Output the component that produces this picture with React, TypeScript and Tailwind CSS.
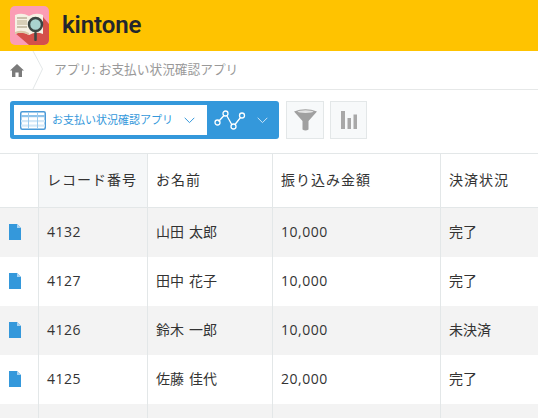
const rows = [
  ["4132", "山田 太郎", "10,000", "完了"],
  ["4127", "田中 花子", "10,000", "完了"],
  ["4126", "鈴木 一郎", "10,000", "未決済"],
  ["4125", "佐藤 佳代", "20,000", "完了"],
  ["", "", "", ""],
];

const font = { fontFamily: '"Open Sans", "Noto Sans CJK JP", sans-serif' };

function Logo() {
  return (
    <svg width="39" height="39" viewBox="0 0 39 39" className="shrink-0">
      <rect width="39" height="39" rx="5" fill="#fb9db5" />
      <path d="M33 11 L39 18 V34 a5 5 0 0 1 -5 5 H19 L5 27 Z" fill="#d4504a" />
      <path d="M5 9 Q12 6 19 10 Q26 6 33 9 V28 Q26 25 19 29 Q12 25 5 28 Z" fill="#f6f1e4" />
      <path d="M5 26 Q12 23 19 27 V29 Q12 25 5 28 Z" fill="#d9c9a8" />
      <rect x="7" y="11" width="10" height="2" fill="#c9c0ab" />
      <rect x="7" y="14" width="10" height="5" fill="#d8cfb8" />
      <rect x="7" y="20" width="10" height="2" fill="#c9c0ab" />
      <circle cx="25.5" cy="18.5" r="6.5" fill="#a9d3cf" stroke="#3b4643" strokeWidth="2.5" />
      <rect x="24.2" y="26" width="2.6" height="9" rx="1" fill="#3b4643" />
    </svg>
  );
}

function DocIcon() {
  return (
    <svg width="12" height="16" viewBox="0 0 12 16">
      <path d="M0 0 H8 L12 4 V16 H0 Z" fill="#3498db" />
      <path d="M8 0 L12 4 H8 Z" fill="#a9d3f2" />
    </svg>
  );
}

function Chevron({ color }: { color: string }) {
  return (
    <svg width="11" height="7" viewBox="0 0 11 7" fill="none">
      <path d="M0.7 0.8 L5.5 5.6 L10.3 0.8" stroke={color} strokeWidth="1" />
    </svg>
  );
}

export default function App() {
  return (
    <div className="w-[538px] h-[418px] overflow-hidden bg-white flex flex-col" style={font}>
      <header className="h-[51px] shrink-0 bg-[#ffc300] flex items-center pl-[10px] pb-[1px]">
        <Logo />
        <span className="ml-[13px] text-[24px] font-semibold text-[#22262e] font-['Roboto'] leading-none tracking-[-0.1px]">
          kintone
        </span>
      </header>

      <nav className="h-[39px] shrink-0 border-b border-[#e6e8e8] flex items-center relative">
        <svg width="14" height="13" viewBox="0 0 14 13" className="ml-[10px]">
          <path d="M7 0 L14 6.6 H12 V13 H8.6 V8.5 H5.4 V13 H2 V6.6 H0 Z" fill="#7b7b7b" />
        </svg>
        <svg width="12" height="39" viewBox="0 0 12 39" className="ml-[8px]" fill="none">
          <path d="M1 0 L10.5 18 L1 38" stroke="#e3e7e8" strokeWidth="1" />
        </svg>
        <span className="ml-[10px] text-[12.7px] text-[#999] whitespace-nowrap">アプリ: お支払い状況確認アプリ</span>
      </nav>

      <div className="h-[63px] shrink-0 flex items-start pl-[10px] pt-[11px] gap-[6px]">
        <div className="w-[269px] h-[38px] bg-[#3498db] rounded-[3px] flex items-center pl-[4px]">
          <div className="w-[193px] h-[30px] bg-white flex items-center pl-[6px] pr-[12px]">
            <svg width="26" height="19" viewBox="0 0 26 19" className="shrink-0">
              <rect x="0.75" y="0.75" width="24.5" height="17.5" rx="1.5" fill="#fff" stroke="#4a9ad8" strokeWidth="1.5" />
              <rect x="1" y="4" width="24" height="2.2" fill="#8fc3ea" />
              <rect x="1" y="9" width="24" height="2.2" fill="#d4e8f7" />
              <rect x="1" y="13.5" width="24" height="2.2" fill="#d4e8f7" />
              <path d="M8.5 1 V18 M17.5 1 V18" stroke="#9ccbee" strokeWidth="1" />
            </svg>
            <span className="ml-[6px] text-[11px] text-[#3498db] whitespace-nowrap flex-1">お支払い状況確認アプリ</span>
            <Chevron color="#3498db" />
          </div>
          <svg width="32" height="20" viewBox="0 0 32 20" className="ml-[7px]" fill="none" stroke="#fff" strokeWidth="1.3">
            <path d="M4.5 11.5 L10 5.5 M13 6 L18 15 M21 14.5 L26.5 7.5" />
            <circle cx="3.5" cy="12.5" r="2.5" />
            <circle cx="11.5" cy="3.5" r="2.5" />
            <circle cx="19.5" cy="16.5" r="2.5" />
            <circle cx="28" cy="5.5" r="2.5" />
          </svg>
          <span className="ml-[11px] flex"><Chevron color="#cfe6f7" /></span>
        </div>
        <button className="w-[38px] h-[38px] ml-[1px] bg-[#f7f9fa] border border-[#e3e7e8] flex items-center justify-center">
          <svg width="23" height="22" viewBox="0 0 23 22">
            <path d="M0 2.5 Q11.5 -2 23 2.5 L14.5 12 V20.5 Q11.5 22.5 8.5 20.5 V12 Z" fill="#a0a0a0" />
            <ellipse cx="11.5" cy="2.6" rx="8" ry="1.3" fill="#e4e4e4" />
          </svg>
        </button>
        <button className="w-[37px] h-[38px] bg-[#f7f9fa] border border-[#e3e7e8] flex items-center justify-center">
          <svg width="16" height="18" viewBox="0 0 16 18" fill="#a8a8a8">
            <rect x="0" y="0" width="4" height="18" />
            <rect x="6.5" y="7" width="3.5" height="11" />
            <rect x="12.5" y="3.5" width="3.5" height="14.5" />
          </svg>
        </button>
      </div>

      <table className="table-fixed border-collapse w-[538px] text-[14px] text-[#333] border-t border-[#e3e7e8]">
        <colgroup>
          <col className="w-[38.5px]" />
          <col className="w-[109px]" />
          <col className="w-[125px]" />
          <col className="w-[168px]" />
          <col />
        </colgroup>
        <thead>
          <tr className="h-[54px] border-b border-[#e3e7e8] tracking-[1px]">
            <th className="border-r border-[#e3e7e8]"></th>
            <th className="border-r border-[#e3e7e8] bg-[#f5f7f8] font-normal text-left pl-[8px] pb-[2px] whitespace-nowrap">レコード番号</th>
            <th className="border-r border-[#e3e7e8] font-normal text-left pl-[8px] pb-[2px]">お名前</th>
            <th className="border-r border-[#e3e7e8] font-normal text-left pl-[8px] pb-[2px]">振り込み金額</th>
            <th className="font-normal text-left pl-[8px] pb-[2px]">決済状況</th>
          </tr>
        </thead>
        <tbody>
          {rows.map((r, i) => (
            <tr key={i} className={i % 2 === 0 ? "h-[49px] bg-[#f3f3f3]" : "h-[49px] bg-white"}>
              <td className="border-r border-[#e3e7e8] pl-[9px]">
                {r[0] && <span className="flex"><DocIcon /></span>}
              </td>
              <td className="border-r border-[#e3e7e8] pl-[8px] pb-[2px] tracking-[0.5px]">{r[0]}</td>
              <td className="border-r border-[#e3e7e8] pl-[8px] pb-[2px] [word-spacing:1.4px]">{r[1]}</td>
              <td className="border-r border-[#e3e7e8] pl-[8px] pb-[2px] tracking-[0.5px]">{r[2]}</td>
              <td className="pl-[8px] pb-[2px]">{r[3]}</td>
            </tr>
          ))}
        </tbody>
      </table>
    </div>
  );
}
